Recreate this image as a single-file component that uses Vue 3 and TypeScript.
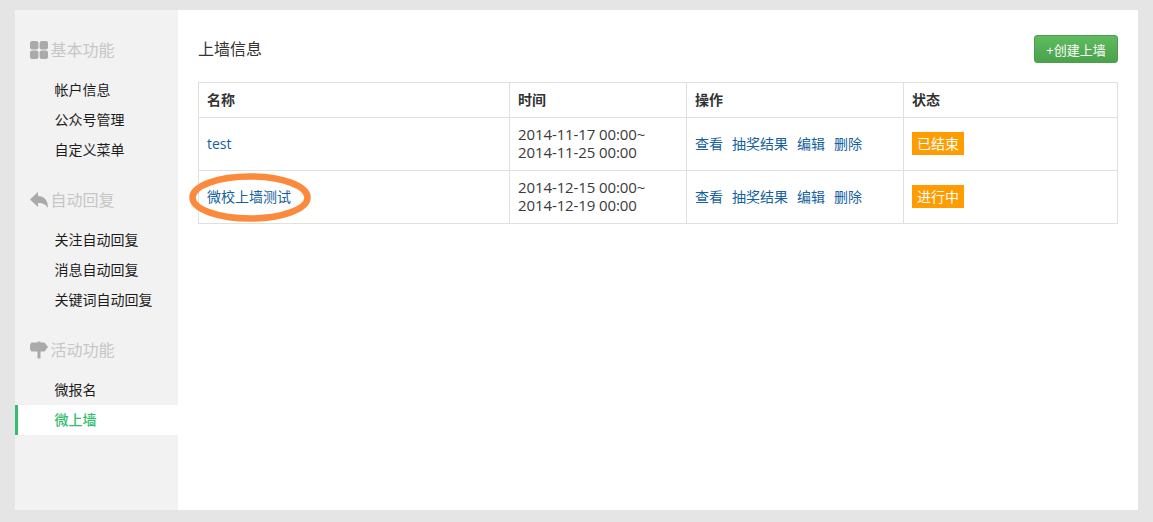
<script setup lang="ts">
interface MenuItem { label: string; active?: boolean }
interface MenuGroup { title: string; icon: 'grid' | 'reply' | 'sign'; items: MenuItem[] }
const groups: MenuGroup[] = [
  { title: '基本功能', icon: 'grid', items: [{ label: '帐户信息' }, { label: '公众号管理' }, { label: '自定义菜单' }] },
  { title: '自动回复', icon: 'reply', items: [{ label: '关注自动回复' }, { label: '消息自动回复' }, { label: '关键词自动回复' }] },
  { title: '活动功能', icon: 'sign', items: [{ label: '微报名' }, { label: '微上墙', active: true }] },
]
const rows = [
  { name: 'test', start: '2014-11-17 00:00~', end: '2014-11-25 00:00', status: '已结束', ring: false },
  { name: '微校上墙测试', start: '2014-12-15 00:00~', end: '2014-12-19 00:00', status: '进行中', ring: true },
]
const actions = ['查看', '抽奖结果', '编辑', '删除']
</script>

<template>
  <div class="page">
    <div class="shell">
      <aside class="side">
        <section v-for="g in groups" :key="g.title" class="group">
          <h3 class="group-title">
            <svg class="icon" viewBox="0 0 18 18" width="18" height="18" aria-hidden="true">
              <g v-if="g.icon === 'grid'" fill="#aaa">
                <rect x="0" y="0" width="8.400" height="8.400" rx="2" />
                <rect x="9.600" y="0" width="8.400" height="8.400" rx="2" />
                <rect x="0" y="9.600" width="8.400" height="8.400" rx="2" />
                <rect x="9.600" y="9.600" width="8.400" height="8.400" rx="2" />
              </g>
              <path v-else-if="g.icon === 'reply'" fill="#aaa" d="M0 8.500 8 1V5C14 5 18 9 18 17 16 13.500 13 12 8 12V16Z" />
              <path v-else fill="#aaa" d="M7.500 0.500h3v1H14.500L18 6l-3.500 4.500h-4V17.500h-3V10.500H2C0.800 10.500 0 9 0 6S0.800 1.500 2 1.500h5.500Z" />
            </svg>
            <span class="group-label">{{ g.title }}</span>
          </h3>
          <ul class="menu">
            <li v-for="it in g.items" :key="it.label" class="menu-item" :class="{ active: it.active }">{{ it.label }}</li>
          </ul>
        </section>
      </aside>
      <main class="main">
        <header class="head">
          <h2 class="title">上墙信息</h2>
          <button class="create" type="button">+创建上墙</button>
        </header>
        <table class="grid">
          <colgroup>
            <col class="c1" /><col class="c2" /><col class="c3" /><col />
          </colgroup>
          <thead>
            <tr><th>名称</th><th>时间</th><th>操作</th><th>状态</th></tr>
          </thead>
          <tbody>
            <tr v-for="r in rows" :key="r.name">
              <td class="name-cell">
                <a class="link">{{ r.name }}</a>
                <svg v-if="r.ring" class="ring" viewBox="0 0 122 49" width="122" height="49" aria-hidden="true">
                  <ellipse cx="61" cy="24.500" rx="57.500" ry="21" fill="none" stroke="#fb8a3c" stroke-width="6.500" />
                </svg>
              </td>
              <td class="date">{{ r.start }}<br />{{ r.end }}</td>
              <td>
                <div class="actions"><a v-for="a in actions" :key="a" class="link">{{ a }}</a></div>
              </td>
              <td><span class="badge">{{ r.status }}</span></td>
            </tr>
          </tbody>
        </table>
      </main>
    </div>
  </div>
</template>

<style>
html, body { margin: 0; background: #e5e5e5; }
</style>

<style scoped>
.page {
  box-sizing: border-box;
  height: 522px;
  padding: 10px 15px 12px;
  background: #e5e5e5;
  font-family: "Open Sans", "Noto Sans CJK SC", sans-serif;
  font-size: 14px;
  color: #333;
}
.shell { display: flex; height: 500px; background: #fff; }
.side { width: 163px; flex: none; background: #f2f2f2; padding-top: 25px; box-sizing: border-box; }
.group { margin-bottom: 20px; }
.group-title {
  display: flex;
  align-items: center;
  gap: 2.500px;
  height: 30px;
  margin: 0 0 10px;
  padding-left: 15px;
  font-size: 16px;
  font-weight: 400;
  color: #c6c6c6;
}
.group-label { padding-bottom: 2px; }
.icon { flex: none; }
.menu { list-style: none; margin: 0; padding: 0; }
.menu-item { height: 30px; line-height: 30px; padding-left: 39.500px; color: #1c1c1c; }
.menu-item.active {
  padding-left: 36.500px;
  border-left: 3px solid #35bd6d;
  background: #fff;
  color: #35bd6d;
  font-weight: 500;
}
.main { flex: 1; min-width: 0; padding: 25px 20px 0; }
.head { display: flex; align-items: center; justify-content: space-between; height: 28px; margin-bottom: 19px; }
.title { margin: 0; padding-bottom: 2px; font-size: 16px; font-weight: 400; color: #333; }
.create {
  box-sizing: border-box;
  width: 84px;
  height: 28px;
  padding: 0;
  border: 1px solid #4b9f4b;
  border-radius: 3px;
  background: linear-gradient(#60bb60, #4aa24a);
  color: #fff;
  font: inherit;
  font-size: 13px;
}
.grid { width: 920px; table-layout: fixed; border-collapse: collapse; }
.c1 { width: 311px; }
.c2 { width: 177px; }
.c3 { width: 217px; }
th, td {
  padding: 8px;
  border: 1px solid #e0e0e0;
  line-height: 18px;
  text-align: left;
  vertical-align: middle;
  font-weight: 400;
}
th { font-weight: 700; }
.date { padding: 7px 8px 9px; font-size: 15px; letter-spacing: -0.100px; color: #3a3a3a; }
.name-cell { position: relative; }
.link { color: #14619f; }
.ring { position: absolute; left: -10px; top: 2px; pointer-events: none; }
.actions { display: flex; gap: 9px; }
.badge {
  display: block;
  width: fit-content;
  height: 23px;
  margin-bottom: 1px;
  line-height: 23px;
  padding: 0 5px;
  background: #ff9c00;
  color: #fff;
}
</style>
